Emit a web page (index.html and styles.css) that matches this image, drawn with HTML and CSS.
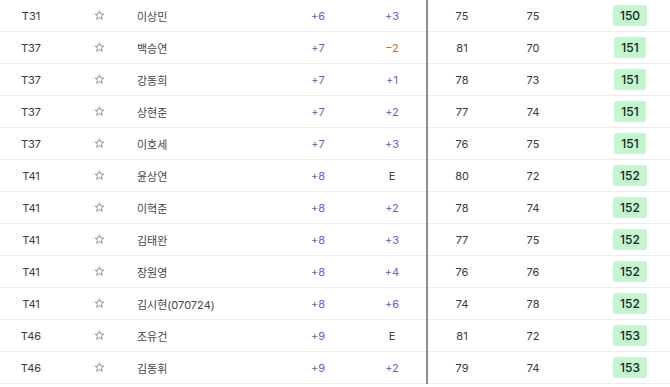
FILE: index.html
```html
<!DOCTYPE html>
<html lang="ko">
<head>
<meta charset="utf-8">
<link rel="stylesheet" href="styles.css">
</head>
<body>
<div class="table">
  <div class="row"><div class="c rank">T31</div><div class="c star"><svg viewBox="0 0 12 12"><path d="M6 1.2 7.4 4.3 10.7 4.6 8.2 6.8 9 10.1 6 8.4 3 10.1 3.8 6.8 1.3 4.6 4.6 4.3Z"/></svg></div><div class="c name">이상민</div><div class="c sc up">+6</div><div class="c td up">+3</div><div class="c r">75</div><div class="c r">75</div><div class="c tot"><span class="badge">150</span></div></div>
  <div class="row"><div class="c rank">T37</div><div class="c star"><svg viewBox="0 0 12 12"><path d="M6 1.2 7.4 4.3 10.7 4.6 8.2 6.8 9 10.1 6 8.4 3 10.1 3.8 6.8 1.3 4.6 4.6 4.3Z"/></svg></div><div class="c name">백승연</div><div class="c sc up">+7</div><div class="c td down">−2</div><div class="c r">81</div><div class="c r">70</div><div class="c tot"><span class="badge">151</span></div></div>
  <div class="row"><div class="c rank">T37</div><div class="c star"><svg viewBox="0 0 12 12"><path d="M6 1.2 7.4 4.3 10.7 4.6 8.2 6.8 9 10.1 6 8.4 3 10.1 3.8 6.8 1.3 4.6 4.6 4.3Z"/></svg></div><div class="c name">강동희</div><div class="c sc up">+7</div><div class="c td up">+1</div><div class="c r">78</div><div class="c r">73</div><div class="c tot"><span class="badge">151</span></div></div>
  <div class="row"><div class="c rank">T37</div><div class="c star"><svg viewBox="0 0 12 12"><path d="M6 1.2 7.4 4.3 10.7 4.6 8.2 6.8 9 10.1 6 8.4 3 10.1 3.8 6.8 1.3 4.6 4.6 4.3Z"/></svg></div><div class="c name">상현준</div><div class="c sc up">+7</div><div class="c td up">+2</div><div class="c r">77</div><div class="c r">74</div><div class="c tot"><span class="badge">151</span></div></div>
  <div class="row"><div class="c rank">T37</div><div class="c star"><svg viewBox="0 0 12 12"><path d="M6 1.2 7.4 4.3 10.7 4.6 8.2 6.8 9 10.1 6 8.4 3 10.1 3.8 6.8 1.3 4.6 4.6 4.3Z"/></svg></div><div class="c name">이호세</div><div class="c sc up">+7</div><div class="c td up">+3</div><div class="c r">76</div><div class="c r">75</div><div class="c tot"><span class="badge">151</span></div></div>
  <div class="row"><div class="c rank">T41</div><div class="c star"><svg viewBox="0 0 12 12"><path d="M6 1.2 7.4 4.3 10.7 4.6 8.2 6.8 9 10.1 6 8.4 3 10.1 3.8 6.8 1.3 4.6 4.6 4.3Z"/></svg></div><div class="c name">윤상연</div><div class="c sc up">+8</div><div class="c td even">E</div><div class="c r">80</div><div class="c r">72</div><div class="c tot"><span class="badge">152</span></div></div>
  <div class="row"><div class="c rank">T41</div><div class="c star"><svg viewBox="0 0 12 12"><path d="M6 1.2 7.4 4.3 10.7 4.6 8.2 6.8 9 10.1 6 8.4 3 10.1 3.8 6.8 1.3 4.6 4.6 4.3Z"/></svg></div><div class="c name">이혁준</div><div class="c sc up">+8</div><div class="c td up">+2</div><div class="c r">78</div><div class="c r">74</div><div class="c tot"><span class="badge">152</span></div></div>
  <div class="row"><div class="c rank">T41</div><div class="c star"><svg viewBox="0 0 12 12"><path d="M6 1.2 7.4 4.3 10.7 4.6 8.2 6.8 9 10.1 6 8.4 3 10.1 3.8 6.8 1.3 4.6 4.6 4.3Z"/></svg></div><div class="c name">김태완</div><div class="c sc up">+8</div><div class="c td up">+3</div><div class="c r">77</div><div class="c r">75</div><div class="c tot"><span class="badge">152</span></div></div>
  <div class="row"><div class="c rank">T41</div><div class="c star"><svg viewBox="0 0 12 12"><path d="M6 1.2 7.4 4.3 10.7 4.6 8.2 6.8 9 10.1 6 8.4 3 10.1 3.8 6.8 1.3 4.6 4.6 4.3Z"/></svg></div><div class="c name">장원영</div><div class="c sc up">+8</div><div class="c td up">+4</div><div class="c r">76</div><div class="c r">76</div><div class="c tot"><span class="badge">152</span></div></div>
  <div class="row"><div class="c rank">T41</div><div class="c star"><svg viewBox="0 0 12 12"><path d="M6 1.2 7.4 4.3 10.7 4.6 8.2 6.8 9 10.1 6 8.4 3 10.1 3.8 6.8 1.3 4.6 4.6 4.3Z"/></svg></div><div class="c name">김시현(070724)</div><div class="c sc up">+8</div><div class="c td up">+6</div><div class="c r">74</div><div class="c r">78</div><div class="c tot"><span class="badge">152</span></div></div>
  <div class="row"><div class="c rank">T46</div><div class="c star"><svg viewBox="0 0 12 12"><path d="M6 1.2 7.4 4.3 10.7 4.6 8.2 6.8 9 10.1 6 8.4 3 10.1 3.8 6.8 1.3 4.6 4.6 4.3Z"/></svg></div><div class="c name">조유건</div><div class="c sc up">+9</div><div class="c td even">E</div><div class="c r">81</div><div class="c r">72</div><div class="c tot"><span class="badge">153</span></div></div>
  <div class="row"><div class="c rank">T46</div><div class="c star"><svg viewBox="0 0 12 12"><path d="M6 1.2 7.4 4.3 10.7 4.6 8.2 6.8 9 10.1 6 8.4 3 10.1 3.8 6.8 1.3 4.6 4.6 4.3Z"/></svg></div><div class="c name">김동휘</div><div class="c sc up">+9</div><div class="c td up">+2</div><div class="c r">79</div><div class="c r">74</div><div class="c tot"><span class="badge">153</span></div></div>
</div>
</body>
</html>
```
FILE: styles.css
```css
html, body {
  margin: 0;
  padding: 0;
  background: #fff;
  overflow: hidden;
}
body {
  font-family: Inter, "Noto Sans CJK KR", sans-serif;
  font-size: 11px;
  color: #3a3a3a;
}
.table {
  width: 690px;
}
.row {
  display: grid;
  grid-template-columns: 62px 75px 143px 76px 72px 68px 74px 120px;
  height: 31px;
  border-bottom: 1px solid #ececec;
}
.c {
  display: flex;
  align-items: center;
  justify-content: center;
}
.name {
  justify-content: flex-start;
  color: #444;
}
.star svg {
  width: 11px;
  height: 11px;
  fill: none;
  stroke: #7b86a8;
  stroke-width: 1;
  stroke-linejoin: round;
}
.up { color: #5866bf; }
.down { color: #c26a38; }
.even { color: #444; }
.td {
  border-right: 2px solid #8c8c8c;
  margin-bottom: -1px;
  padding-left: 2px;
}
.badge {
  background: #c2f5d0;
  color: #1c1c1c;
  font-weight: 500;
  font-size: 12px;
  padding: 4px 7px;
  border-radius: 3px;
  line-height: 13px;
}
```
